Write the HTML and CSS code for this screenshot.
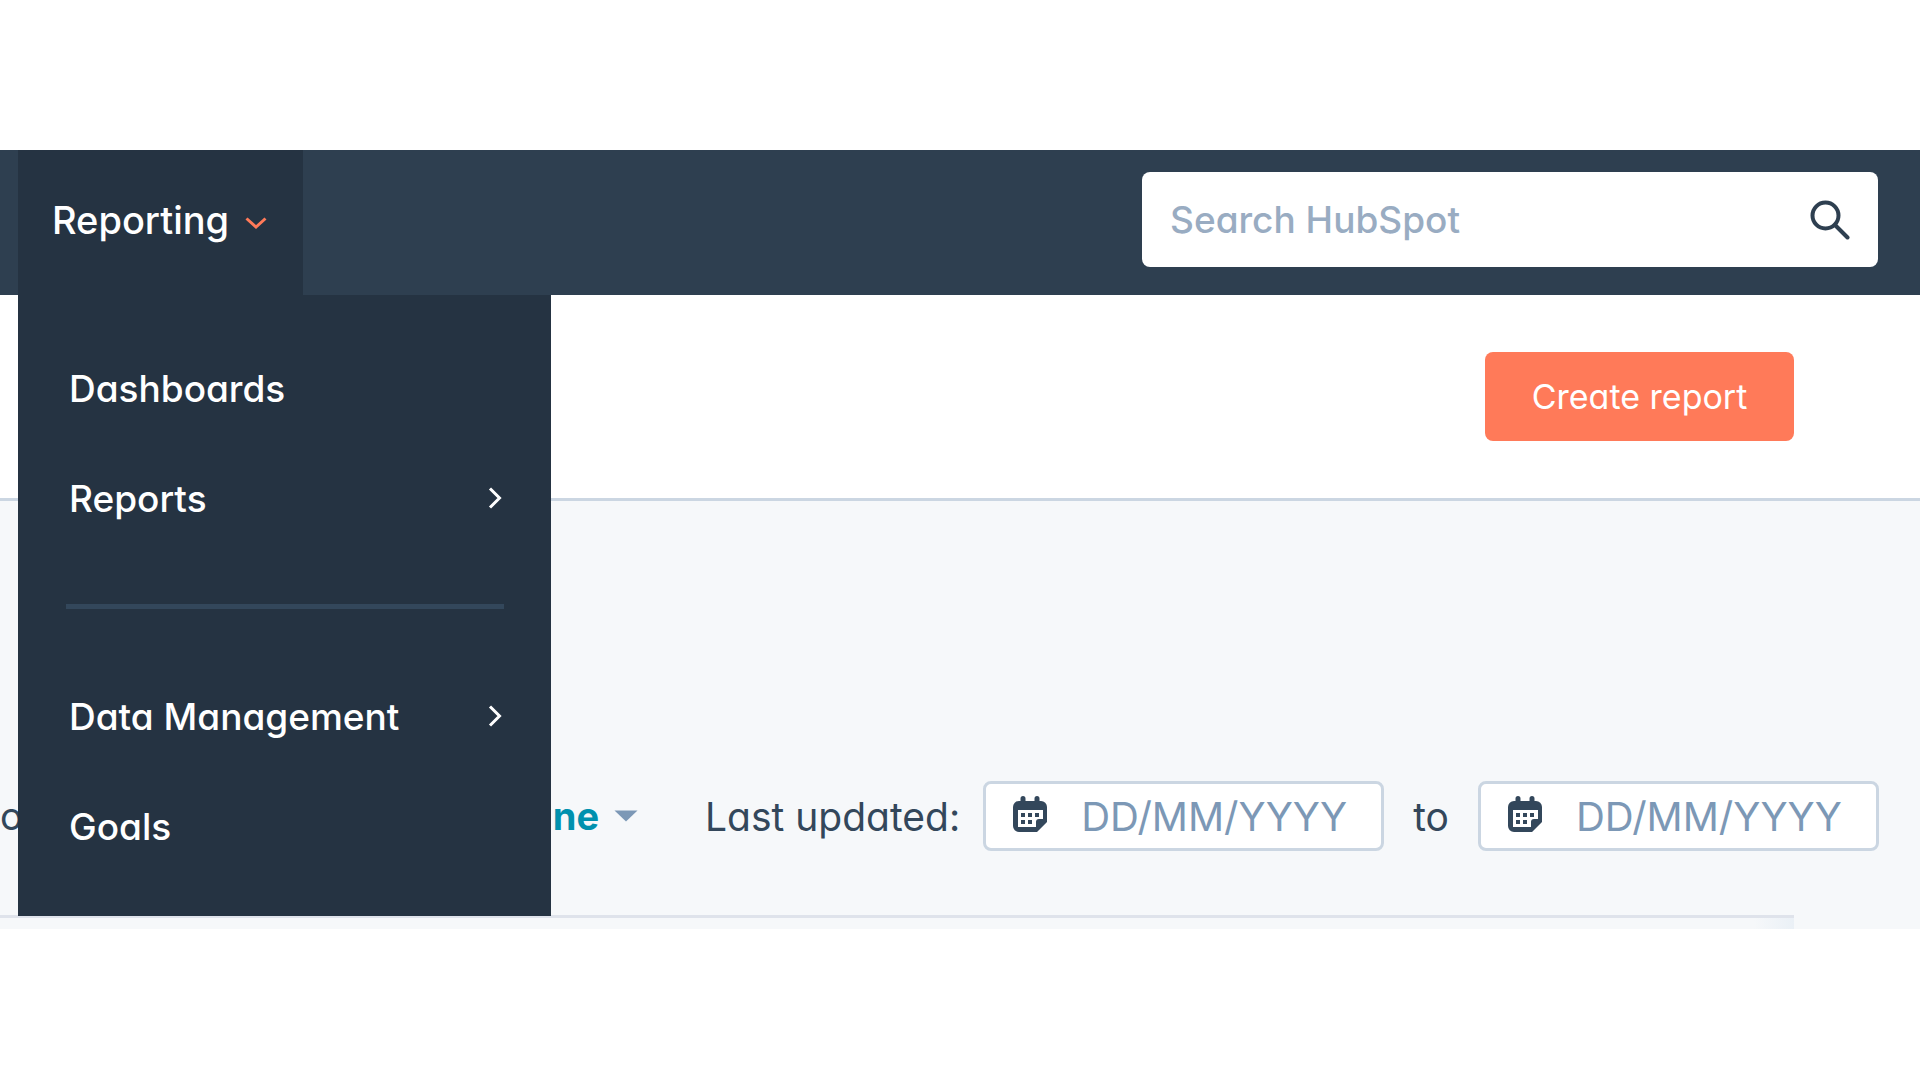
FILE: index.html
```html
<!DOCTYPE html>
<html lang="en">
<head>
    <meta charset="UTF-8">
    <meta name="viewport" content="width=device-width, initial-scale=1.0">
    <title>Reports</title>
    <link rel="stylesheet" href="styles.css">
</head>
<body>

    <div class="app">
        <header class="topbar">
            <nav class="nav">
                <button type="button" class="nav-tab">
                    Reporting
                    <svg class="tab-arrow" width="22" height="12" viewBox="0 0 22 12"><path d="M1.5 1.5 L11 10 L20.5 1.5"/></svg>
                </button>
                <ul class="menu">
                    <li><a href="#">Dashboards</a></li>
                    <li>
                        <a href="#">Reports
                            <svg class="menu-arrow" width="14" height="22" viewBox="0 0 14 22"><path d="M2 1.5 L11.5 11 L2 20.5"/></svg>
                        </a>
                    </li>
                    <li class="divider"></li>
                    <li>
                        <a href="#">Data Management
                            <svg class="menu-arrow" width="14" height="22" viewBox="0 0 14 22"><path d="M2 1.5 L11.5 11 L2 20.5"/></svg>
                        </a>
                    </li>
                    <li><a href="#">Goals</a></li>
                </ul>
            </nav>
            <form class="search">
                <input type="text" placeholder="Search HubSpot" aria-label="Search HubSpot">
                <button type="button" aria-label="Search">
                    <svg width="40" height="40" viewBox="0 0 40 40"><circle cx="15.5" cy="15.5" r="13"/><path d="M25 25 L37.5 37.5"/></svg>
                </button>
            </form>
        </header>

        <div class="page-header">
            <button type="button" class="create">Create report</button>
        </div>

        <main class="content">
            <div class="filters">
                <span class="filter-start">o</span>
                <button type="button" class="filter-select">
                    ne
                    <svg width="24" height="12" viewBox="0 0 24 12"><path d="M0.5 0.5 H23.5 L12 11.5 Z"/></svg>
                </button>
                <label for="dateFrom">Last updated:</label>
                <div class="date">
                    <svg width="34" height="37" viewBox="0 0 34 37">
                        <path class="cal" d="M10 0a2.5 2.5 0 0 1 2.5 2.5V5h9V2.5a2.5 2.5 0 0 1 5 0V5H28a6 6 0 0 1 6 6v15L24 36H6a6 6 0 0 1-6-6V11a6 6 0 0 1 6-6h1.5V2.5A2.5 2.5 0 0 1 10 0Z"/>
                        <path class="cal-page" d="M5 14H30V23H26a3 3 0 0 0-3 3V31H5Z"/>
                        <path class="cal" d="M8 17h4v4H8zM15 17h4v4h-4zM22 17h4v4h-4zM8 24h4v4H8zM15 24h4v4h-4z"/>
                    </svg>
                    <input type="text" id="dateFrom" placeholder="DD/MM/YYYY">
                </div>
                <label for="dateTo" class="to">to</label>
                <div class="date">
                    <svg width="34" height="37" viewBox="0 0 34 37">
                        <path class="cal" d="M10 0a2.5 2.5 0 0 1 2.5 2.5V5h9V2.5a2.5 2.5 0 0 1 5 0V5H28a6 6 0 0 1 6 6v15L24 36H6a6 6 0 0 1-6-6V11a6 6 0 0 1 6-6h1.5V2.5A2.5 2.5 0 0 1 10 0Z"/>
                        <path class="cal-page" d="M5 14H30V23H26a3 3 0 0 0-3 3V31H5Z"/>
                        <path class="cal" d="M8 17h4v4H8zM15 17h4v4h-4zM22 17h4v4h-4zM8 24h4v4H8zM15 24h4v4h-4z"/>
                    </svg>
                    <input type="text" id="dateTo" placeholder="DD/MM/YYYY">
                </div>
            </div>
            <div class="table-top"></div>
        </main>
    </div>

</body>
</html>
```
FILE: styles.css
```css
* {
    box-sizing: border-box;
}
body {
    margin: 0;
    background: #fff;
    font-family: Inter, "Open Sans", sans-serif;
    font-feature-settings: "cv11";
    font-size: 38px;
    color: #33475b;
    overflow-x: hidden;
}
button, input {
    font: inherit;
    font-feature-settings: inherit;
    border: none;
    background: none;
    padding: 0;
}
button {
    cursor: pointer;
}
.app {
    margin-top: 150px;
}

/* Top navigation */
.topbar {
    display: flex;
    justify-content: space-between;
    height: 145px;
    padding: 0 42px 0 18px;
    background: #2e3f50;
}
.nav {
    position: relative;
    display: flex;
}
.nav-tab {
    display: flex;
    align-items: center;
    gap: 16px;
    padding: 0 36px 6px 34px;
    background: #253342;
    color: #fff;
    font-weight: 500;
}
.tab-arrow {
    margin-top: 6px;
}
.tab-arrow path {
    fill: none;
    stroke: #ff7a59;
    stroke-width: 3;
}
.menu {
    position: absolute;
    top: 100%;
    left: 0;
    z-index: 1;
    width: 533px;
    margin: 0;
    padding: 38px 47px 35px 48px;
    list-style: none;
    background: #253342;
}
.menu a {
    display: flex;
    align-items: center;
    justify-content: space-between;
    height: 110px;
    padding: 0 2px 0 3px;
    color: #fff;
    font-size: 37px;
    font-weight: 500;
    text-decoration: none;
}
.menu-arrow path {
    fill: none;
    stroke: #fff;
    stroke-width: 3;
}
.divider {
    height: 5px;
    margin: 51px 0 52px;
    background: #33475b;
}
.search {
    display: flex;
    align-items: center;
    width: 736px;
    height: 95px;
    margin-top: 22px;
    padding: 0 28px;
    background: #fff;
    border-radius: 8px;
}
.search input {
    flex: 1;
    min-width: 0;
    font-size: 37px;
    font-weight: 500;
}
.search input::placeholder {
    color: #99acc2;
    opacity: 1;
}
.search svg {
    display: block;
    fill: none;
    stroke: #2e3f50;
    stroke-width: 4;
    stroke-linecap: round;
}

/* Page header */
.page-header {
    display: flex;
    justify-content: flex-end;
    padding: 57px 126px;
    border-bottom: 3px solid #cbd6e2;
}
.create {
    width: 309px;
    height: 89px;
    background: #ff7a59;
    border-radius: 8px;
    color: #fff;
    font-size: 34px;
}

/* Filters */
.content {
    padding-top: 280px;
    background: #f6f8fa;
}
.filters {
    display: flex;
    align-items: center;
    padding: 0 41px 64px 0;
}
.filters label {
    margin-right: 23px;
    font-size: 39px;
}
.filter-start {
    margin-right: auto;
}
.filter-select {
    display: flex;
    align-items: center;
    gap: 15px;
    margin-right: 67px;
    color: #0091ae;
    font-weight: 700;
}
.filter-select svg {
    fill: #7c98b6;
}
.filters .to {
    margin: 0 29px;
}
.date {
    display: flex;
    align-items: center;
    gap: 34px;
    width: 401px;
    height: 70px;
    padding: 0 20px 0 27px;
    background: #fff;
    border: 3px solid #cbd6e2;
    border-radius: 8px;
}
.date svg {
    flex: none;
    margin-bottom: 4px;
}
.date input {
    flex: 1;
    min-width: 0;
    font-size: 40px;
}
.date input::placeholder {
    color: #7c98b6;
    opacity: 1;
}
.cal {
    fill: #33475b;
}
.cal-page {
    fill: #fff;
}

/* Top edge of the reports table */
.table-top {
    height: 14px;
    margin-right: 126px;
    border-top: 3px solid #dfe3eb;
    background: linear-gradient(to left, #eaf0f6, #f6f8fa 40px);
}
```
